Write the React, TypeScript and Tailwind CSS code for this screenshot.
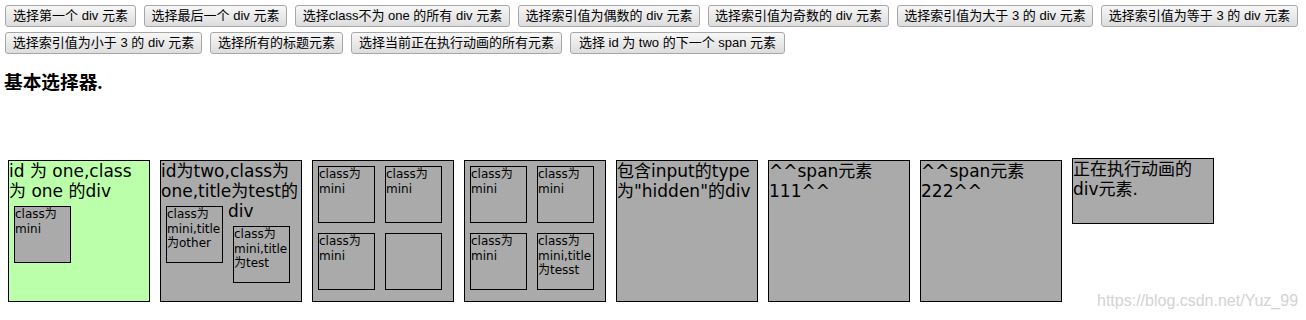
import React from 'react';

const row1 = [
  { label: '选择第一个 div 元素', w: 'w-[131px]' },
  { label: '选择最后一个 div 元素', w: 'w-[143px]' },
  { label: '选择class不为 one 的所有 div 元素', w: 'w-[215px]' },
  { label: '选择索引值为偶数的 div 元素', w: 'w-[182px]' },
  { label: '选择索引值为奇数的 div 元素', w: 'w-[181px]' },
  { label: '选择索引值为大于 3 的 div 元素', w: 'w-[196px]' },
  { label: '选择索引值为等于 3 的 div 元素', w: 'w-[197px]' },
];

const row2 = [
  { label: '选择索引值为小于 3 的 div 元素', w: 'w-[197px]' },
  { label: '选择所有的标题元素', w: 'w-[133px]' },
  { label: '选择当前正在执行动画的所有元素', w: 'w-[211px]' },
  { label: '选择 id 为 two 的下一个 span 元素', w: 'w-[215px]' },
];

const Btn: React.FC<{ label: string; w: string }> = ({ label, w }) => (
  <button
    className={`${w} shrink-0 rounded-[3px] border border-[#a7a7a7] bg-gradient-to-b from-[#f7f7f7] to-[#dddddd] py-[2px] text-center text-[13px] leading-[16px] text-black`}
  >
    {label}
  </button>
);

const box = 'w-[142px] shrink-0 border border-black bg-[#aaaaaa]';
const mini =
  'float-left m-[5px] h-[57px] w-[57px] border border-black bg-[#aaaaaa] text-[12px] leading-[14.5px]';

const App: React.FC = () => {
  return (
    <div className="relative h-[320px] w-[1306px] overflow-hidden bg-white font-['Liberation_Sans','Noto_Sans_CJK_SC',sans-serif] text-black">
      <div className="flex flex-col gap-[5px] pl-[5px] pt-[5px]">
        <div className="flex gap-2">
          {row1.map((b) => (
            <Btn key={b.label} {...b} />
          ))}
        </div>
        <div className="flex gap-2">
          {row2.map((b) => (
            <Btn key={b.label} {...b} />
          ))}
        </div>
      </div>

      <h3 className="mt-[18px] pl-[4px] font-['Liberation_Serif','Noto_Sans_CJK_SC',serif] text-[18.7px] font-bold leading-[22px]">
        基本选择器.
      </h3>

      <div className="mt-[66px] flex items-start gap-[10px] pl-[8px] font-['DejaVu_Sans','Noto_Sans_CJK_SC',sans-serif] text-[17px] leading-[20px]">
        <div className={`${box} h-[142px] bg-[#bbffaa]`}>
          id 为 one,class 为 one 的div
          <div className={mini}>class为mini</div>
        </div>

        <div className={`${box} h-[142px]`}>
          id为two,class为one,title为test的div
          <div className={mini}>class为mini,title为other</div>
          <div className={mini}>class为mini,title为test</div>
        </div>

        <div className={`${box} h-[142px]`}>
          <div className={mini}>class为mini</div>
          <div className={mini}>class为mini</div>
          <div className={mini}>class为mini</div>
          <div className={mini}></div>
        </div>

        <div className={`${box} h-[142px]`}>
          <div className={mini}>class为mini</div>
          <div className={mini}>class为mini</div>
          <div className={mini}>class为mini</div>
          <div className={mini}>class为mini,title为tesst</div>
        </div>

        <div className={`${box} h-[142px]`}>
          包含input的type为"hidden"的div
          <input type="hidden" />
        </div>

        <div className={`${box} h-[142px]`}>
          <span>^^span元素 111^^</span>
        </div>

        <div className={`${box} h-[142px]`}>
          <span>^^span元素 222^^</span>
        </div>

        <div className={`${box} -mt-[2px] h-[66px]`}>正在执行动画的div元素.</div>
      </div>

      <div className="absolute left-[1097px] top-[292px] font-['Liberation_Sans',sans-serif] text-[16px] leading-[18px] text-[#d3d3d3]">
        https://blog.csdn.net/Yuz_99
      </div>
    </div>
  );
};

export default App;
